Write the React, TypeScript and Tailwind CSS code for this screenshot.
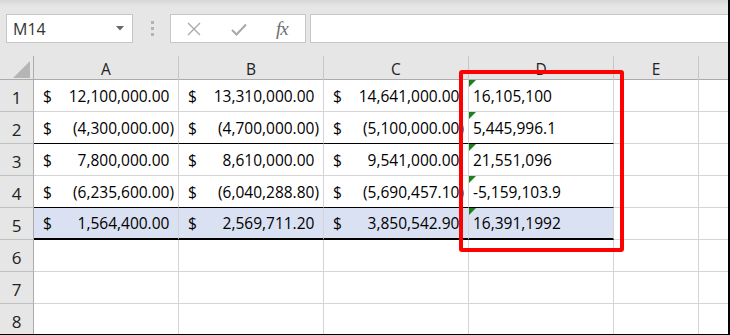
import React from "react";

const F = { fontFamily: '"Open Sans", "Noto Sans", sans-serif' };

type Row = {
  n: number;
  vals: [string, boolean][];
  d: string;
  bottom: "none" | "thin" | "thick";
  blue?: boolean;
};

const rows: Row[] = [
  { n: 1, vals: [["12,100,000.00", false], ["13,310,000.00", false], ["14,641,000.00", false]], d: "16,105,100", bottom: "none" },
  { n: 2, vals: [["4,300,000.00", true], ["4,700,000.00", true], ["5,100,000.00", true]], d: "5,445,996.1", bottom: "thin" },
  { n: 3, vals: [["7,800,000.00", false], ["8,610,000.00", false], ["9,541,000.00", false]], d: "21,551,096", bottom: "none" },
  { n: 4, vals: [["6,235,600.00", true], ["6,040,288.80", true], ["5,690,457.10", true]], d: "-5,159,103.9", bottom: "thin" },
  { n: 5, vals: [["1,564,400.00", false], ["2,569,711.20", false], ["3,850,542.90", false]], d: "16,391,1992", bottom: "thick", blue: true },
];

const gridCols = "grid grid-cols-[34px_145px_145px_145px_145px_85px_1fr]";

function bottomCls(b: Row["bottom"]) {
  if (b === "thin") return "border-b border-b-black";
  if (b === "thick") return "border-b-2 border-b-black";
  return "border-b border-b-[#d4d4d4]";
}

function MoneyCell({ v, neg, row }: { v: string; neg: boolean; row: Row }) {
  return (
    <div
      className={`h-full flex items-center justify-between pl-[9px] pr-[4px] pt-[2px] border-r border-r-[#d4d4d4] ${bottomCls(row.bottom)} ${row.blue ? "bg-[#d9e1f2]" : ""}`}
    >
      <span>$</span>
      <span>
        {neg ? "(" : ""}
        {v}
        <span className={neg ? "" : "invisible"}>)</span>
      </span>
    </div>
  );
}

export default function App() {
  return (
    <div
      className="w-[730px] h-[335px] bg-[#e6e6e6] border-r-2 border-b border-black overflow-hidden relative text-black"
      style={F}
    >
      {/* formula bar area */}
      <div className="h-[56px] relative bg-gradient-to-b from-[#d6d6d6] via-[#e6e6e6] to-[#e6e6e6] bg-[length:100%_12px] bg-no-repeat">
        <div className="flex items-start pt-[14px] pl-[6px]">
          <div className="w-[127px] h-[29px] bg-white border border-[#c6c6c6] flex items-center justify-between pl-[6px] pr-[8px]">
            <span className="text-[16px] text-[#333] leading-none">M14</span>
            <svg width="8" height="5" viewBox="0 0 8 5">
              <path d="M0 0 L8 0 L4 4.5 Z" fill="#666" />
            </svg>
          </div>
          <div className="w-[37px] h-[29px] flex flex-col items-center justify-center gap-[3px] pl-[1px]">
            <div className="w-[3px] h-[3px] bg-[#b3b3b3]" />
            <div className="w-[3px] h-[3px] bg-[#b3b3b3]" />
            <div className="w-[3px] h-[3px] bg-[#b3b3b3]" />
          </div>
          <div className="w-[136px] h-[29px] bg-white border border-[#c6c6c6] flex items-center pl-[16px]">
            <svg width="14" height="14" viewBox="0 0 14 14">
              <path d="M1 1 L13 13 M13 1 L1 13" stroke="#a8a8a8" strokeWidth="1.3" fill="none" />
            </svg>
            <svg width="16" height="13" viewBox="0 0 16 13" className="ml-[30px] mt-[2px]">
              <path d="M1 7 L5.5 11.5 L15 1.5" stroke="#a8a8a8" strokeWidth="2" fill="none" />
            </svg>
            <span
              className="ml-[29px] italic text-[19px] text-[#6e6e6e] leading-none tracking-[-1px]"
              style={{ fontFamily: '"Liberation Serif", "DejaVu Serif", serif' }}
            >
              fx
            </span>
          </div>
          <div className="flex-1 h-[29px] ml-[4px] bg-white border-y border-l border-[#c6c6c6]" />
        </div>
      </div>

      {/* column headers */}
      <div className={`${gridCols} h-[24px] border-b border-b-[#ababab] text-[15.5px] text-[#222]`}>
        <div className="border-r border-r-[#ababab] flex items-end justify-end pr-[3px] pb-[3px]">
          <svg width="17" height="17" viewBox="0 0 17 17">
            <path d="M17 0 L17 17 L0 17 Z" fill="#b5b5b5" />
          </svg>
        </div>
        {["A", "B", "C", "D", "E", ""].map((c, i) => (
          <div
            key={i}
            className={`flex items-center justify-center pt-[2px] ${i < 5 ? "border-r border-r-[#c6c6c6]" : ""}`}
          >
            {c}
          </div>
        ))}
      </div>

      {/* data rows */}
      <div className="bg-white text-[15.5px]">
        {rows.map((r) => (
          <div key={r.n} className={`${gridCols} h-[32px]`}>
            <div className="bg-[#e6e6e6] border-r border-r-[#ababab] border-b border-b-[#c0c0c0] flex items-end justify-center pb-[1px] text-[17px] text-[#222]">
              {r.n}
            </div>
            {r.vals.map(([v, neg], i) => (
              <MoneyCell key={i} v={v} neg={neg} row={r} />
            ))}
            <div
              className={`relative h-full flex items-center pl-[4px] pt-[2px] border-r border-r-[#d4d4d4] ${bottomCls(r.bottom)} ${r.blue ? "bg-[#d9e1f2]" : ""}`}
            >
              <div className="absolute left-0 top-0 w-0 h-0 border-t-[7px] border-r-[7px] border-t-[#1e7f1e] border-r-transparent" />
              {r.d}
            </div>
            <div className="border-r border-r-[#d4d4d4] border-b border-b-[#d4d4d4]" />
            <div className="border-b border-b-[#d4d4d4]" />
          </div>
        ))}
        {[6, 7, 8].map((n) => (
          <div key={n} className={`${gridCols} h-[32px]`}>
            <div className="bg-[#e6e6e6] border-r border-r-[#ababab] border-b border-b-[#c0c0c0] flex items-end justify-center pb-[1px] text-[17px] text-[#222]">
              {n}
            </div>
            {[0, 1, 2, 3, 4].map((i) => (
              <div key={i} className="border-r border-r-[#d4d4d4] border-b border-b-[#d4d4d4]" />
            ))}
            <div className="border-b border-b-[#d4d4d4]" />
          </div>
        ))}
      </div>

      {/* red highlight */}
      <div className="absolute left-[459px] top-[70px] w-[165px] h-[182px] border-4 border-[#ff0000] rounded-[3px]" />
    </div>
  );
}
